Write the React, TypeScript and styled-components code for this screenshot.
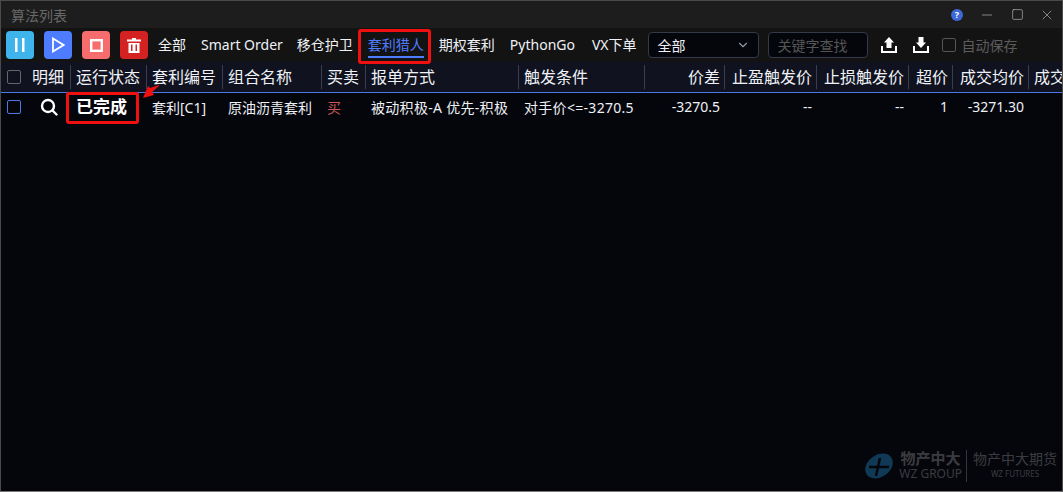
import React from "react";
import styled, { createGlobalStyle } from "styled-components";
import { ChevronDown, Minus, Square, X } from "lucide-react";

const GlobalStyle = createGlobalStyle`
  html, body {
    margin: 0;
    padding: 0;
    background: #05060c;
    font-family: "Noto Sans", "Noto Sans CJK SC", sans-serif;
  }
  * { box-sizing: border-box; }
`;

const COLUMNS = "26px 44px 76px 76px 99px 44px 153px 126px 80px 92px 92px 44px 76px 40px";

const Window = styled.div`
  position: relative;
  width: 1063px;
  height: 492px;
  overflow: hidden;
  border: 1px solid #4a4a4a;
  border-bottom-color: #777;
  background: #05060c;
  color: #eef1f6;
`;

const TitleBar = styled.div`
  display: flex;
  align-items: center;
  justify-content: space-between;
  height: 27px;
  padding-left: 10px;
  background: #1d1d1d;
`;

const Title = styled.span`
  font-size: 14px;
  color: #686868;
`;

const WindowControls = styled.div`
  display: grid;
  grid-template-columns: repeat(4, 30px);
  justify-items: center;
  align-items: center;
  color: #b9b9b9;
`;

const Help = styled.span`
  display: flex;
  align-items: center;
  justify-content: center;
  width: 12px;
  height: 12px;
  border-radius: 50%;
  background: #3c69d6;
  color: #fff;
  font-size: 9px;
  font-weight: 700;
`;

const Toolbar = styled.div`
  display: flex;
  align-items: center;
  height: 34px;
  padding-left: 5px;
  background: #131313;
`;

const ActionButton = styled.button<{ $bg: string }>`
  display: flex;
  align-items: center;
  justify-content: center;
  width: 28px;
  height: 28px;
  margin-right: 10px;
  padding: 0;
  border: 0;
  border-radius: 4px;
  background: ${(p) => p.$bg};
  color: #fff;
`;

const Tab = styled.span<{ $active?: boolean; $gap: number }>`
  position: relative;
  margin-right: ${(p) => p.$gap}px;
  font-size: 14px;
  line-height: 20px;
  white-space: nowrap;
  color: ${(p) => (p.$active ? "#4f7dff" : "#eef1f6")};
  ${(p) =>
    p.$active &&
    `&::after {
      content: "";
      position: absolute;
      left: 0;
      right: 0;
      bottom: -3px;
      height: 2px;
      background: #4f7dff;
    }`}
`;

const Select = styled.div`
  display: flex;
  align-items: center;
  justify-content: space-between;
  width: 111px;
  height: 26px;
  margin-right: 9px;
  padding: 0 8px 0 9px;
  border: 1px solid #343a4a;
  border-radius: 4px;
  background: #05060c;
  font-size: 14px;
  color: #8f95a3;
`;

const SelectValue = styled.span`
  color: #eef1f6;
`;

const SearchBox = styled.div`
  display: flex;
  align-items: center;
  width: 100px;
  height: 26px;
  margin-right: 13px;
  padding-left: 9px;
  border: 1px solid #343a4a;
  border-radius: 4px;
  background: #05060c;
  font-size: 14px;
  color: #555;
`;

const IconSlot = styled.span`
  display: flex;
  width: 16px;
  height: 16px;
  margin-right: 16px;
`;

const AutoSave = styled.label`
  display: flex;
  align-items: center;
  gap: 6px;
  margin-left: -3px;
  font-size: 14px;
  color: #5c5c5c;
`;

const Check = styled.span<{ $color: string }>`
  display: block;
  width: 14px;
  height: 14px;
  border: 1px solid ${(p) => p.$color};
  border-radius: 2px;
`;

const Row = styled.div<{ $header?: boolean }>`
  display: grid;
  grid-template-columns: ${COLUMNS};
  align-items: center;
  white-space: nowrap;
  overflow: hidden;
  height: ${(p) => (p.$header ? "31px" : "26px")};
  font-size: ${(p) => (p.$header ? "16px" : "14px")};
  background: ${(p) => (p.$header ? "#10121f" : "transparent")};
  border-bottom: ${(p) => (p.$header ? "1px solid #4c78e6" : "0")};
`;

const HeadCell = styled.div<{ $right?: boolean }>`
  height: 24px;
  line-height: 24px;
  padding: 0 4px 0 5px;
  text-align: ${(p) => (p.$right ? "right" : "left")};
  border-right: 1px solid #3a3f50;
  overflow: hidden;
`;

const Cell = styled.div<{ $right?: boolean; $sell?: boolean; $tracked?: boolean }>`
  padding: 0 5px;
  text-align: ${(p) => (p.$right ? "right" : "left")};
  letter-spacing: ${(p) => (p.$tracked ? "0.3px" : "0")};
  color: ${(p) => (p.$sell ? "#c95555" : "#eef1f6")};
`;

const CenterCell = styled.div`
  display: flex;
  align-items: center;
  justify-content: center;
`;

const Status = styled.div`
  padding: 0 0 2px 5px;
  font-size: 17px;
  font-weight: 700;
  color: #fff;
`;

const Highlight = styled.div<{ $left: number; $top: number; $w: number; $h: number }>`
  position: absolute;
  left: ${(p) => p.$left}px;
  top: ${(p) => p.$top}px;
  width: ${(p) => p.$w}px;
  height: ${(p) => p.$h}px;
  border: 3px solid #f01010;
  border-radius: 3px;
`;

const Arrow = styled.svg`
  position: absolute;
  left: 141px;
  top: 84px;
`;

const Watermark = styled.div`
  position: absolute;
  right: 5px;
  bottom: 9px;
  display: flex;
  align-items: center;
  gap: 5px;
  opacity: 0.42;
`;

const MarkText = styled.div`
  display: flex;
  flex-direction: column;
  align-items: center;
  line-height: 15px;
`;

const MarkMain = styled.span<{ $size: number; $bold?: boolean }>`
  font-size: ${(p) => p.$size}px;
  font-weight: ${(p) => (p.$bold ? 700 : 400)};
  color: #858585;
`;

const MarkSub = styled.span<{ $size: number }>`
  font-size: ${(p) => p.$size}px;
  color: #858585;
`;

const MarkDivider = styled.span`
  width: 1px;
  height: 32px;
  margin: 0 1px 0 -1px;
  background: #777;
`;

const columns: [string, boolean?][] = [
  ["运行状态"],
  ["套利编号"],
  ["组合名称"],
  ["买卖"],
  ["报单方式"],
  ["触发条件"],
  ["价差", true],
  ["止盈触发价", true],
  ["止损触发价", true],
  ["超价", true],
  ["成交均价", true],
  ["成交"],
];

const PauseIcon = () => (
  <svg width="14" height="14" viewBox="0 0 14 14" fill="#fff">
    <rect x="2" y="0" width="2.500" height="14" />
    <rect x="9" y="0" width="2.500" height="14" />
  </svg>
);

const PlayIcon = () => (
  <svg width="14" height="16" viewBox="0 0 14 16" fill="none" stroke="#fff" strokeWidth="1.800">
    <path d="M2 1.500 12.500 8 2 14.500z" />
  </svg>
);

const StopIcon = () => (
  <svg width="13" height="13" viewBox="0 0 13 13" fill="none" stroke="#fff" strokeWidth="2.400">
    <rect x="1.200" y="1.200" width="10.600" height="10.600" />
  </svg>
);

const TrashIcon = () => (
  <svg width="14" height="15" viewBox="0 0 14 15" fill="#fff">
    <path d="M5 0h4v1.500h5V3.500H0V1.500h5z" />
    <path d="M1.500 5H12.500V15H1.500zM4 6.500V13H5.500V6.500zM8.500 6.500V13H10V6.500z" fillRule="evenodd" />
  </svg>
);

const LensIcon = () => (
  <svg width="18" height="18" viewBox="0 0 18 18" fill="none" stroke="#fff" strokeWidth="2.400">
    <circle cx="8" cy="8" r="6" />
    <path d="M12.500 12.500 16.500 16.500" strokeLinecap="round" />
  </svg>
);

const UploadIcon = () => (
  <svg width="16" height="16" viewBox="0 0 16 16" fill="#fff">
    <path d="M8 0 13 5.500H10.500V11h-5V5.500H3z" />
    <path d="M0 9h2v5h12V9h2v7H0z" />
  </svg>
);

const DownloadIcon = () => (
  <svg width="16" height="16" viewBox="0 0 16 16" fill="#fff">
    <path d="M5.500 0h5v5.500H13L8 11 3 5.500h2.500z" />
    <path d="M0 9h2v5h12V9h2v7H0z" />
  </svg>
);

const App = () => (
  <>
    <GlobalStyle />
    <Window>
      <TitleBar>
        <Title>算法列表</Title>
        <WindowControls>
          <Help>?</Help>
          <Minus size={16} strokeWidth={1} />
          <Square size={13} strokeWidth={1.2} />
          <X size={16} strokeWidth={1} />
        </WindowControls>
      </TitleBar>

      <Toolbar>
        <ActionButton $bg="#3fb3ec"><PauseIcon /></ActionButton>
        <ActionButton $bg="#4d7cfe"><PlayIcon /></ActionButton>
        <ActionButton $bg="#f76d6d"><StopIcon /></ActionButton>
        <ActionButton $bg="#d42222"><TrashIcon /></ActionButton>
        <Tab $gap={15}>全部</Tab>
        <Tab $gap={14}>Smart Order</Tab>
        <Tab $gap={15}>移仓护卫</Tab>
        <Tab $gap={15} $active>套利猎人</Tab>
        <Tab $gap={15}>期权套利</Tab>
        <Tab $gap={17}>PythonGo</Tab>
        <Tab $gap={11}>VX下单</Tab>
        <Select>
          <SelectValue>全部</SelectValue>
          <ChevronDown size={14} />
        </Select>
        <SearchBox>关键字查找</SearchBox>
        <IconSlot><UploadIcon /></IconSlot>
        <IconSlot><DownloadIcon /></IconSlot>
        <AutoSave>
          <Check $color="#555" />
          自动保存
        </AutoSave>
      </Toolbar>

      <Row $header>
        <CenterCell><Check $color="#666" /></CenterCell>
        <HeadCell>明细</HeadCell>
        {columns.map(([label, right]) => (
          <HeadCell key={label} $right={right}>{label}</HeadCell>
        ))}
      </Row>

      <Row>
        <CenterCell><Check $color="#4c78e6" /></CenterCell>
        <CenterCell><LensIcon /></CenterCell>
        <Status>已完成</Status>
        <Cell>套利[C1]</Cell>
        <Cell>原油沥青套利</Cell>
        <Cell $sell>买</Cell>
        <Cell $tracked>被动积极-A 优先-积极</Cell>
        <Cell $tracked>对手价&lt;=-3270.5</Cell>
        <Cell $right>-3270.5</Cell>
        <Cell $right>--</Cell>
        <Cell $right>--</Cell>
        <Cell $right>1</Cell>
        <Cell $right>-3271.30</Cell>
        <Cell />
      </Row>

      <Highlight $left={357} $top={28} $w={73} $h={35} />
      <Highlight $left={65} $top={91} $w={73} $h={32} />
      <Arrow width="18" height="14" viewBox="0 0 18 14">
        <path d="M17 0 8 3 6 1 1 13 12 10 10 7 17 1z" fill="#f01010" />
      </Arrow>

      <Watermark>
        <svg width="30" height="28" viewBox="0 0 30 28">
          <ellipse cx="15" cy="14" rx="15" ry="11" fill="#1f7fb8" transform="rotate(-35 15 14)" />
          <path d="M5 15h20M16 6l-4 18" stroke="#05060c" strokeWidth="2.500" />
        </svg>
        <MarkText>
          <MarkMain $size={15} $bold>物产中大</MarkMain>
          <MarkSub $size={12}>WZ GROUP</MarkSub>
        </MarkText>
        <MarkDivider />
        <MarkText>
          <MarkMain $size={14}>物产中大期货</MarkMain>
          <MarkSub $size={8}>WZ FUTURES</MarkSub>
        </MarkText>
      </Watermark>
    </Window>
  </>
);

export default App;
